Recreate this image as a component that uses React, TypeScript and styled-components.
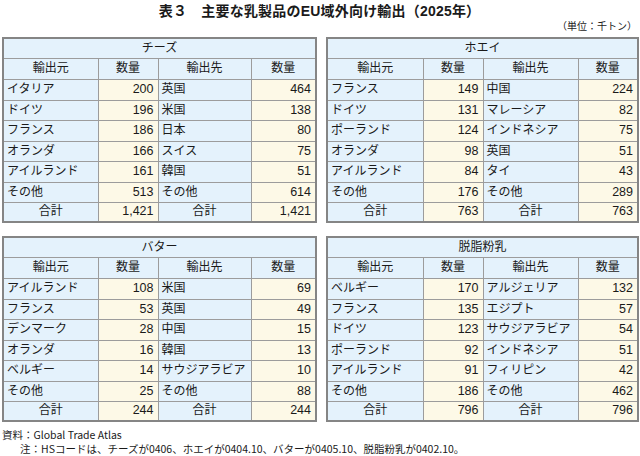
import React from 'react';
import styled, { createGlobalStyle } from 'styled-components';

const GlobalStyle = createGlobalStyle`
  body {
    margin: 0;
    background: #ffffff;
  }
`;

const Page = styled.div`
  width: 640px;
  height: 456px;
  box-sizing: border-box;
  padding: 0 3px 0 2px;
  font-family: 'Liberation Sans', 'Noto Sans CJK JP', sans-serif;
  color: #1a1a1a;
`;

const Title = styled.h1`
  margin: 0;
  padding-top: 1px;
  font-size: 14px;
  line-height: 20px;
  font-weight: bold;
  text-align: center;
  letter-spacing: 0.2px;
`;

const Unit = styled.div`
  margin-top: -1px;
  font-family: 'Noto Sans CJK JP', sans-serif;
  font-size: 10px;
  line-height: 12px;
  text-align: right;
`;

const TableGrid = styled.div`
  display: grid;
  grid-template-columns: 313px 311px;
  column-gap: 11px;
  row-gap: 13px;
  margin-top: 5px;
`;

const Table = styled.table<{ $width: number }>`
  width: ${({ $width }) => $width}px;
  table-layout: fixed;
  border-collapse: collapse;
  border: 2px solid #858585;
  font-size: 12px;
`;

// rows alternate 20/21px so nine of them fill the ~185px of the reference
const Row = styled.tr<{ $tall?: boolean }>`
  height: ${({ $tall }) => ($tall ? '21px' : '20px')};
`;

const HeadCell = styled.th`
  padding: 0;
  border: 1px solid #9c9c9c;
  background: #e4f2fc;
  font-weight: normal;
  text-align: center;
  vertical-align: middle;
  line-height: 13px;
`;

const NameCell = styled.td<{ $center?: boolean }>`
  padding: 0 3px;
  border: 1px solid #9c9c9c;
  background: #e4f2fc;
  text-align: ${({ $center }) => ($center ? 'center' : 'left')};
  white-space: nowrap;
  line-height: 13px;
`;

const NumCell = styled.td`
  padding: 0 4px;
  border: 1px solid #9c9c9c;
  background: #fdf9e7;
  text-align: right;
  white-space: nowrap;
  line-height: 13px;
  font-size: 12.5px;
`;

const Notes = styled.div`
  margin-top: 6px;
  font-family: 'Noto Sans CJK JP', sans-serif;
  font-size: 10.5px;
  line-height: 14px;
`;

const NoteLine = styled.div<{ $indent?: boolean }>`
  padding-left: ${({ $indent }) => ($indent ? '18px' : '0')};
`;

type Product = {
  title: string;
  widths: number[];
  rows: [string, string, string, string][];
  total: [string, string];
};

const LEFT = [95, 60, 93, 65];
const RIGHT = [96, 60, 95, 60];

const products: Product[] = [
  {
    title: 'チーズ',
    widths: LEFT,
    rows: [
      ['イタリア', '200', '英国', '464'],
      ['ドイツ', '196', '米国', '138'],
      ['フランス', '186', '日本', '80'],
      ['オランダ', '166', 'スイス', '75'],
      ['アイルランド', '161', '韓国', '51'],
      ['その他', '513', 'その他', '614'],
    ],
    total: ['1,421', '1,421'],
  },
  {
    title: 'ホエイ',
    widths: RIGHT,
    rows: [
      ['フランス', '149', '中国', '224'],
      ['ドイツ', '131', 'マレーシア', '82'],
      ['ポーランド', '124', 'インドネシア', '75'],
      ['オランダ', '98', '英国', '51'],
      ['アイルランド', '84', 'タイ', '43'],
      ['その他', '176', 'その他', '289'],
    ],
    total: ['763', '763'],
  },
  {
    title: 'バター',
    widths: LEFT,
    rows: [
      ['アイルランド', '108', '米国', '69'],
      ['フランス', '53', '英国', '49'],
      ['デンマーク', '28', '中国', '15'],
      ['オランダ', '16', '韓国', '13'],
      ['ベルギー', '14', 'サウジアラビア', '10'],
      ['その他', '25', 'その他', '88'],
    ],
    total: ['244', '244'],
  },
  {
    title: '脱脂粉乳',
    widths: RIGHT,
    rows: [
      ['ベルギー', '170', 'アルジェリア', '132'],
      ['フランス', '135', 'エジプト', '57'],
      ['ドイツ', '123', 'サウジアラビア', '54'],
      ['ポーランド', '92', 'インドネシア', '51'],
      ['アイルランド', '91', 'フィリピン', '42'],
      ['その他', '186', 'その他', '462'],
    ],
    total: ['796', '796'],
  },
];

const ExportTable = ({ product }: { product: Product }) => {
  const width = product.widths.reduce((a, b) => a + b, 0);
  return (
    <Table $width={width}>
      <colgroup>
        {product.widths.map((w, i) => (
          <col key={i} style={{ width: w }} />
        ))}
      </colgroup>
      <thead>
        <Row>
          <HeadCell colSpan={4}>{product.title}</HeadCell>
        </Row>
        <Row $tall>
          <HeadCell>輸出元</HeadCell>
          <HeadCell>数量</HeadCell>
          <HeadCell>輸出先</HeadCell>
          <HeadCell>数量</HeadCell>
        </Row>
      </thead>
      <tbody>
        {product.rows.map((r, i) => (
          <Row key={i} $tall={i % 2 === 0}>
            <NameCell>{r[0]}</NameCell>
            <NumCell>{r[1]}</NumCell>
            <NameCell>{r[2]}</NameCell>
            <NumCell>{r[3]}</NumCell>
          </Row>
        ))}
        <Row>
          <NameCell $center>合計</NameCell>
          <NumCell>{product.total[0]}</NumCell>
          <NameCell $center>合計</NameCell>
          <NumCell>{product.total[1]}</NumCell>
        </Row>
      </tbody>
    </Table>
  );
};

export default function App() {
  return (
    <>
      <GlobalStyle />
      <Page>
        <Title>表３　主要な乳製品のEU域外向け輸出（2025年）</Title>
        <Unit>（単位：千トン）</Unit>
        <TableGrid>
          {products.map((p) => (
            <ExportTable key={p.title} product={p} />
          ))}
        </TableGrid>
        <Notes>
          <NoteLine>資料：Global Trade Atlas</NoteLine>
          <NoteLine $indent>
            注：HSコードは、チーズが0406、ホエイが0404.10、バターが0405.10、脱脂粉乳が0402.10。
          </NoteLine>
        </Notes>
      </Page>
    </>
  );
}
